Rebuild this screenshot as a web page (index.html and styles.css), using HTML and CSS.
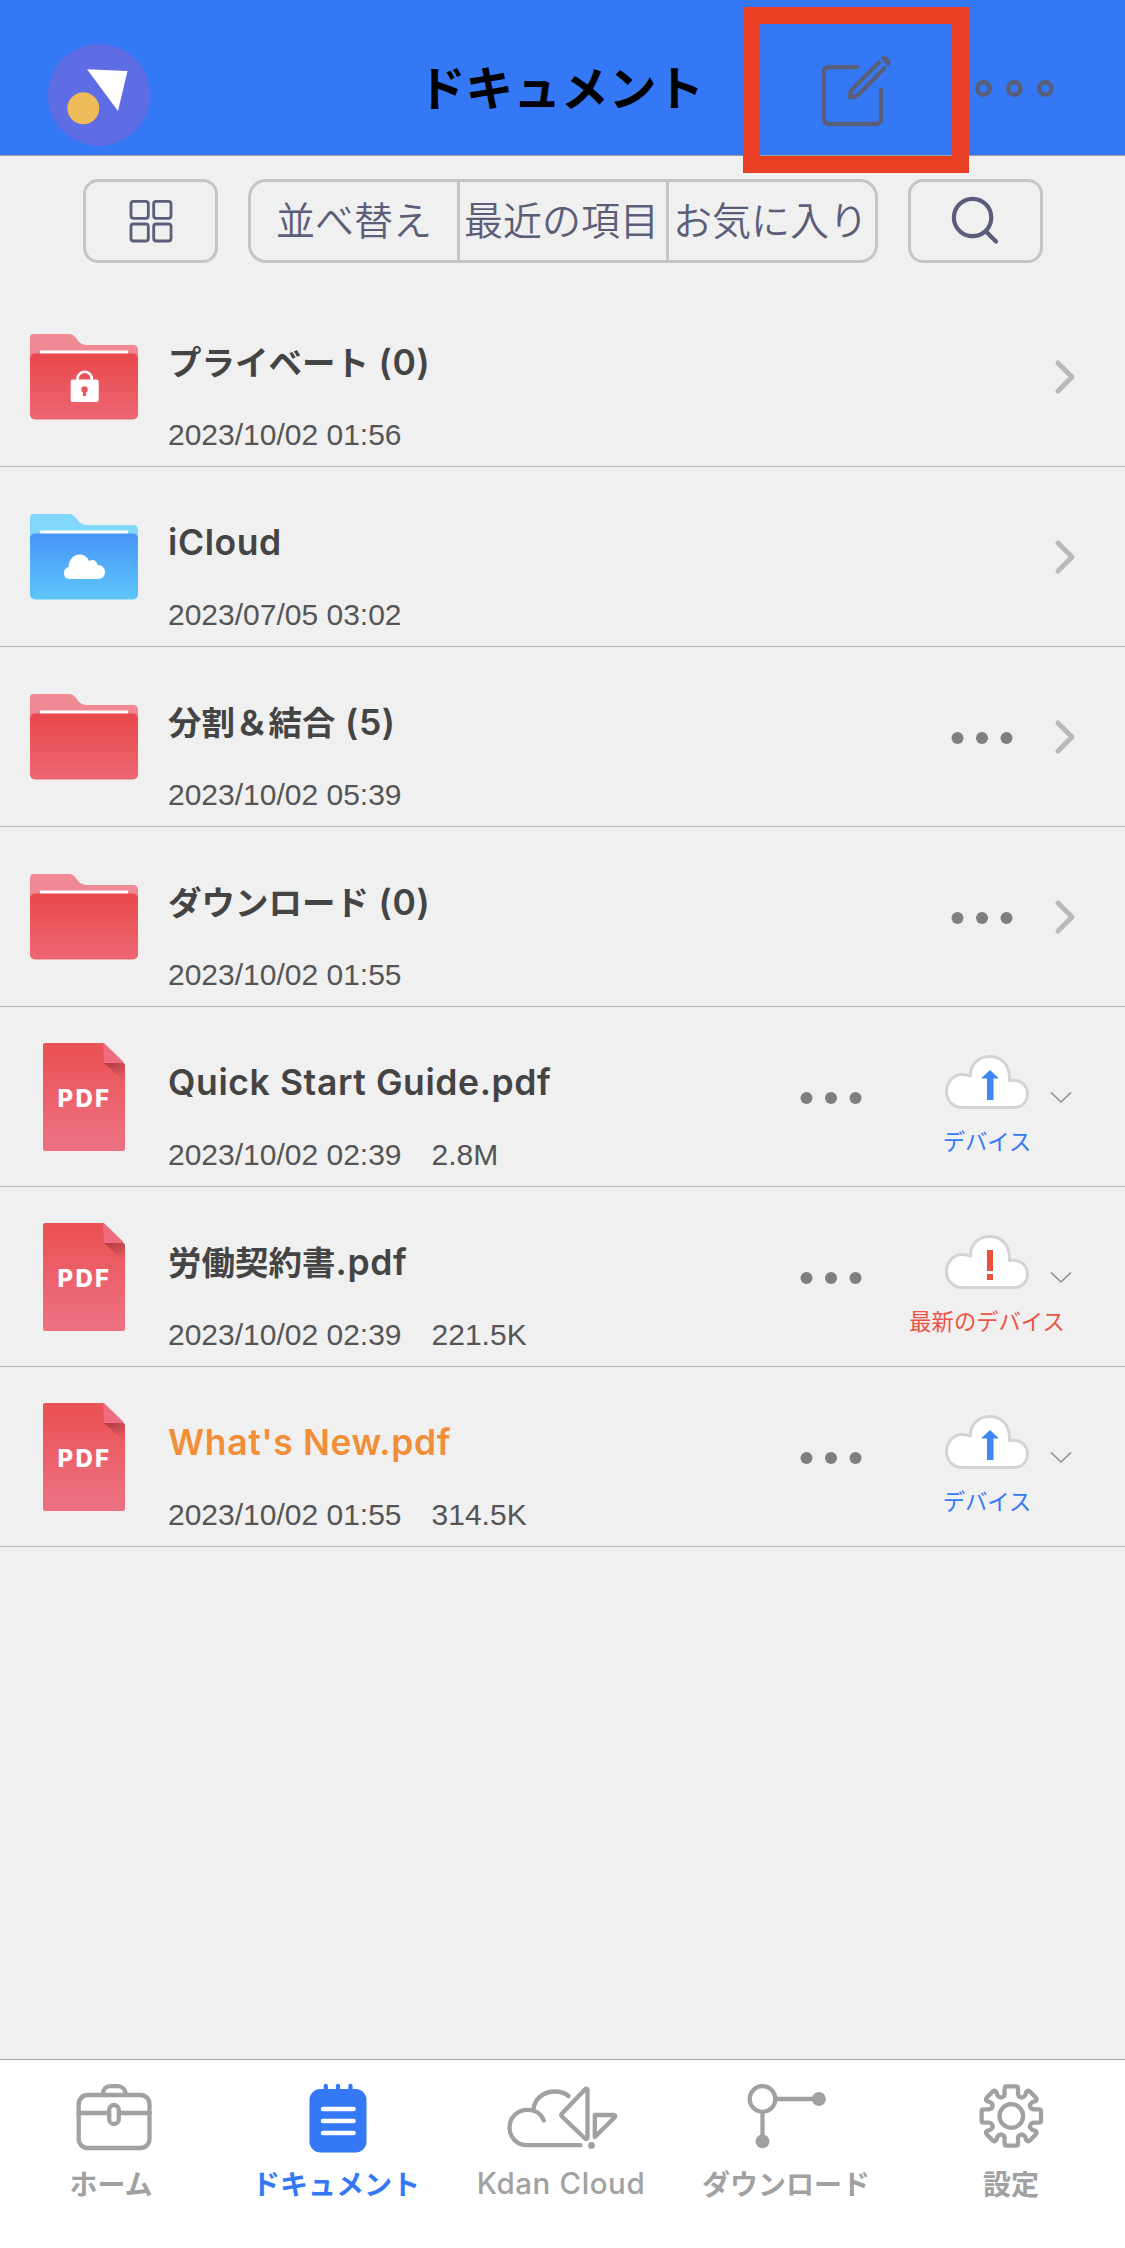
FILE: index.html
```html
<!DOCTYPE html>
<html lang="ja">
<head>
<meta charset="utf-8">
<title>ドキュメント</title>
<link rel="stylesheet" href="styles.css">
</head>
<body>
<svg class="defs" width="0" height="0" aria-hidden="true">
  <defs>
    <linearGradient id="red" x1="0" y1="0" x2="0" y2="1"><stop offset="0" stop-color="#e8484b"/><stop offset="1" stop-color="#ed6772"/></linearGradient>
    <linearGradient id="blue" x1="0" y1="0" x2="0" y2="1"><stop offset="0" stop-color="#4795f8"/><stop offset="1" stop-color="#5fc6f9"/></linearGradient>
    <linearGradient id="page" x1="0" y1="0" x2="0" y2="1"><stop offset=".1" stop-color="#eb5356"/><stop offset=".9" stop-color="#ed7080"/></linearGradient>
    <linearGradient id="shade" x1="0" y1="0" x2=".5" y2="1"><stop offset="0" stop-color="#ab3c40"/><stop offset="1" stop-color="#eb5a60"/></linearGradient>
  </defs>
  <symbol id="folder-red" viewBox="0 0 108 86">
    <path fill="#ef8994" d="M0 25V4Q0 0 4 0H39Q43 0 46 4L49 8Q52 11 56 11H103Q108 11 108 16V25Z"/>
    <path fill="#fff" d="M10 16.500H98V21H10Z"/>
    <rect y="19.500" width="108" height="66" rx="5" fill="url(#red)"/>
  </symbol>
  <symbol id="folder-blue" viewBox="0 0 108 86">
    <path fill="#82d8fa" d="M0 25V4Q0 0 4 0H39Q43 0 46 4L49 8Q52 11 56 11H103Q108 11 108 16V25Z"/>
    <path fill="#fff" d="M10 16.500H98V21H10Z"/>
    <rect y="19.500" width="108" height="66" rx="5" fill="url(#blue)"/>
  </symbol>
  <symbol id="pdf" viewBox="0 0 82 108">
    <path fill="url(#page)" d="M2 0H60L82 22V106Q82 108 80 108H2Q0 108 0 106V2Q0 0 2 0Z"/>
    <path fill="url(#shade)" d="M61 20H79Q82 20 82 23V39Z"/>
    <path fill="#ed6c80" d="M60 0Q61 0 62 1L80.500 19Q81 20 80 20H61Z"/>
  </symbol>
  <symbol id="chevron" viewBox="0 0 24 38">
    <path class="line-chevron" d="M5 5L19 19L5 33"/>
  </symbol>
  <symbol id="dots" viewBox="0 0 62 12">
    <g fill="#7f7f7f"><circle cx="6.500" cy="6" r="6"/><circle cx="31" cy="6" r="6"/><circle cx="55.500" cy="6" r="6"/></g>
  </symbol>
  <symbol id="cloud" viewBox="0 0 84 54">
    <path fill="#fff" stroke="#d4d4d4" stroke-width="3" stroke-linejoin="round" d="M17 52.500C8 52.500 1.500 45.500 1.500 36.500C1.500 27 8.500 19.500 17 19.500C20 19.500 22.500 20 25.500 21C25 10 33 1.500 45 1.500S65.500 11 64.500 25.500C75 24 82.500 30 82.500 39C82.500 47 77 52.500 69 52.500Z"/>
  </symbol>
  <symbol id="expand" viewBox="0 0 22 13">
    <path fill="none" stroke="#8e8e90" stroke-width="1.600" d="M1 1.500L11 11L21 1.500"/>
  </symbol>
</svg>

<div class="app">
  <header class="header">
    <svg class="avatar" viewBox="48 44 102 102">
      <circle cx="99" cy="95" r="51" fill="#5e6de4"/>
      <path fill="#fff" d="M87 69.300L127.500 71L118 111Z"/>
      <circle cx="83.300" cy="108.300" r="16" fill="#edbb58"/>
    </svg>
    <h1 class="title">ドキュメント</h1>
    <div class="actions">
      <div class="edit">
        <svg viewBox="820 54 74 74" width="74" height="74">
          <g fill="none" stroke="#5b5e78" stroke-width="4.300" stroke-linecap="round" stroke-linejoin="round">
            <path d="M857 67.200H829Q824 67.200 824 72V119Q824 124 829 124H876Q881 124 881 119V90"/>
            <path d="M879 62.500L852 89.500Q850 92 849.800 97Q855 97.500 857.500 95.500L884.500 68"/>
          </g>
          <path fill="#5b5e78" d="M880.500 57.500Q884 55 887.500 57.500Q891 60.500 890.500 64L888 66.500Z"/>
        </svg>
        <span class="highlight"></span>
      </div>
      <svg class="more" viewBox="975 80 79 17">
        <g fill="none" stroke="#5b5e78" stroke-width="4.500"><circle cx="983.500" cy="88.500" r="6.200"/><circle cx="1014.400" cy="88.500" r="6.200"/><circle cx="1045.300" cy="88.500" r="6.200"/></g>
      </svg>
    </div>
  </header>

  <div class="toolbar">
    <div class="tool">
      <svg viewBox="129 199 44 44" width="44" height="44">
        <g fill="none" stroke="#5b5e78" stroke-width="2.800"><rect x="131" y="201.300" width="17.300" height="17" rx="2.500"/><rect x="153.700" y="201.300" width="17.300" height="17" rx="2.500"/><rect x="131" y="224" width="17.300" height="17" rx="2.500"/><rect x="153.700" y="224" width="17.300" height="17" rx="2.500"/></g>
      </svg>
    </div>
    <div class="segments"><span>並べ替え</span><span>最近の項目</span><span>お気に入り</span></div>
    <div class="tool">
      <svg viewBox="951 196 50 50" width="50" height="50">
        <g fill="none" stroke="#5b5e78" stroke-width="4.200" stroke-linecap="round"><circle cx="972.600" cy="217.500" r="18.700"/><path d="M986 231.500L996 241.500"/></g>
      </svg>
    </div>
  </div>

  <main class="list">
    <div class="row">
      <div class="thumb"><svg class="folder" viewBox="0 0 108 86"><use href="#folder-red"/>
        <rect x="40.700" y="45.500" width="28" height="22.500" rx="2" fill="#fff"/><path d="M47.500 47V45a7.200 7.200 0 0 1 14.400 0V47" fill="none" stroke="#fff" stroke-width="2.600"/><circle cx="54.500" cy="55.500" r="3.200" fill="#e95760"/><path d="M54.500 56V62" stroke="#e95760" stroke-width="3.200"/></svg></div>
      <div class="info"><div class="name">プライベート<span class="latin"> (0)</span></div><div class="meta">2023/10/02 01:56</div></div>
      <svg class="chevron"><use href="#chevron"/></svg>
    </div>
    <div class="row">
      <div class="thumb"><svg class="folder" viewBox="0 0 108 86"><use href="#folder-blue"/>
        <path fill="#fff" d="M40 65C35.500 65 34 62 34 59C34 56 36 53.500 38.500 53C39 45 44 40.500 50 40.500C54 40.500 57.500 43 59 47C63 44.500 67 47 67.500 51C72 51 75 54 75 58C75 62 72.500 65 68 65Z"/></svg></div>
      <div class="info"><div class="name"><span class="latin">iCloud</span></div><div class="meta">2023/07/05 03:02</div></div>
      <svg class="chevron"><use href="#chevron"/></svg>
    </div>
    <div class="row">
      <div class="thumb"><svg class="folder"><use href="#folder-red"/></svg></div>
      <div class="info"><div class="name">分割＆結合<span class="latin"> (5)</span></div><div class="meta">2023/10/02 05:39</div></div>
      <svg class="dots"><use href="#dots"/></svg>
      <svg class="chevron"><use href="#chevron"/></svg>
    </div>
    <div class="row">
      <div class="thumb"><svg class="folder"><use href="#folder-red"/></svg></div>
      <div class="info"><div class="name">ダウンロード<span class="latin"> (0)</span></div><div class="meta">2023/10/02 01:55</div></div>
      <svg class="dots"><use href="#dots"/></svg>
      <svg class="chevron"><use href="#chevron"/></svg>
    </div>
    <div class="row">
      <div class="thumb"><svg class="pdf" viewBox="0 0 82 108"><use href="#pdf"/><text class="pdf-text" x="14.500" y="64">PDF</text></svg></div>
      <div class="info"><div class="name"><span class="latin">Quick Start Guide.pdf</span></div><div class="meta"><span>2023/10/02 02:39</span><span>2.8M</span></div></div>
      <svg class="dots"><use href="#dots"/></svg>
      <div class="sync"><svg class="cloud" viewBox="0 0 84 54"><use href="#cloud"/><path fill="#3d88f7" d="M45 15L54 23.500H48.500V45H42V23.500H36Z"/></svg><span>デバイス</span></div>
      <svg class="expand"><use href="#expand"/></svg>
    </div>
    <div class="row">
      <div class="thumb"><svg class="pdf" viewBox="0 0 82 108"><use href="#pdf"/><text class="pdf-text" x="14.500" y="64">PDF</text></svg></div>
      <div class="info"><div class="name">労働契約書<span class="latin">.pdf</span></div><div class="meta"><span>2023/10/02 02:39</span><span>221.5K</span></div></div>
      <svg class="dots"><use href="#dots"/></svg>
      <div class="sync sync-alert"><svg class="cloud" viewBox="0 0 84 54"><use href="#cloud"/><path fill="#e9513f" d="M42 15H48V36H42ZM42 39H48V45H42Z"/></svg><span>最新のデバイス</span></div>
      <svg class="expand"><use href="#expand"/></svg>
    </div>
    <div class="row">
      <div class="thumb"><svg class="pdf" viewBox="0 0 82 108"><use href="#pdf"/><text class="pdf-text" x="14.500" y="64">PDF</text></svg></div>
      <div class="info"><div class="name name-new"><span class="latin">What's New.pdf</span></div><div class="meta"><span>2023/10/02 01:55</span><span>314.5K</span></div></div>
      <svg class="dots"><use href="#dots"/></svg>
      <div class="sync"><svg class="cloud" viewBox="0 0 84 54"><use href="#cloud"/><path fill="#3d88f7" d="M45 15L54 23.500H48.500V45H42V23.500H36Z"/></svg><span>デバイス</span></div>
      <svg class="expand"><use href="#expand"/></svg>
    </div>
  </main>

  <nav class="tabs">
    <div class="tab">
      <svg viewBox="52.500 2080 120 76"><g class="line"><rect x="78.200" y="2095" width="70.800" height="53" rx="9"/><path d="M78 2113H106.500M120.500 2113H149"/><rect x="108.700" y="2105" width="9.600" height="19" rx="4.800"/><path d="M102.500 2094C102.500 2089 105.500 2086.200 110 2086.200H117C121.500 2086.200 125 2089 125 2094"/></g></svg>
      <span>ホーム</span>
    </div>
    <div class="tab tab-active">
      <svg viewBox="277.500 2080 120 76"><rect x="309" y="2089" width="57" height="63.500" rx="11" fill="#3478f6"/><path d="M325.300 2086V2092M337.500 2086V2092M350 2086V2092" stroke="#3478f6" stroke-width="4.300" stroke-linecap="round"/><path d="M322.500 2109H353M322.500 2121H353M322.500 2133H353" stroke="#fff" stroke-width="4.600" stroke-linecap="round"/></svg>
      <span>ドキュメント</span>
    </div>
    <div class="tab">
      <svg viewBox="502.500 2080 120 76"><g class="line"><path d="M580 2145.200H527C516 2145.200 509 2137 509 2127.500C509 2118 516.500 2109.800 527 2109.800C535 2109.800 541 2114 543.300 2120.500"/><path d="M533 2109C534 2099 543 2091.500 554.500 2091.500C560 2091.500 564.500 2093 568 2096"/><path d="M587 2089.500V2138Q586 2140 584.500 2138.500L561.500 2116.500Q560 2115 561.500 2113.500L584.500 2089.500Q586 2088 587 2089.500Z"/><path d="M594.300 2115H613.500Q616 2115.500 614 2117.500L594.300 2137Z"/></g><circle cx="591" cy="2145.400" r="3.400" fill="#a1a1a1"/></svg>
      <span class="latin">Kdan Cloud</span>
    </div>
    <div class="tab">
      <svg viewBox="727.500 2080 120 76"><g class="line"><circle cx="762" cy="2099" r="12.800"/><path d="M775 2099H818M762 2112V2141"/></g><g fill="#a1a1a1"><circle cx="818.400" cy="2099" r="6.900"/><circle cx="762" cy="2141.300" r="6.900"/></g></svg>
      <span>ダウンロード</span>
    </div>
    <div class="tab">
      <svg viewBox="952.500 2080 120 76"><g class="line" transform="translate(1010.800 2116)"><circle r="11.800"/><path d="M-4.500 -29.700H4.500Q6.700 -29.700 6.700 -27.500V-22.500C6.700 -18.500 11 -17 13.800 -20.500L15 -24Q16.500 -26 18.500 -24.500L24.500 -18.500Q26 -16.500 24.500 -15L20.500 -13.500C17 -11 19 -6.700 23 -6.700H27.500Q29.700 -6.700 29.700 -4.500V4.500Q29.700 6.700 27.500 6.700H23C19 6.700 17 11 20.500 13.500L24.500 15Q26 16.500 24.500 18.500L18.500 24.500Q16.500 26 15 24L13.800 20.500C11 17 6.700 18.500 6.700 22.500V27.500Q6.700 29.700 4.500 29.700H-4.500Q-6.700 29.700 -6.700 27.500V22.500C-6.700 18.500 -11 17 -13.800 20.500L-15 24Q-16.500 26 -18.500 24.500L-24.500 18.500Q-26 16.500 -24.500 15L-20.500 13.500C-17 11 -19 6.700 -23 6.700H-27.500Q-29.700 6.700 -29.700 4.500V-4.500Q-29.700 -6.700 -27.500 -6.700H-23C-19 -6.700 -17 -11 -20.500 -13.500L-24.500 -15Q-26 -16.500 -24.500 -18.500L-18.500 -24.500Q-16.500 -26 -15 -24L-13.800 -20.500C-11 -17 -6.700 -18.500 -6.700 -22.500V-27.500Q-6.700 -29.700 -4.500 -29.700Z"/></g></svg>
      <span>設定</span>
    </div>
  </nav>
</div>
</body>
</html>
```
FILE: styles.css
```css
* { box-sizing: border-box; }

body {
  margin: 0;
  background: #f0f0f0;
  font-family: "Noto Sans CJK JP", sans-serif;
}

svg { display: block; flex: none; }
.defs { position: absolute; }

.app {
  display: flex;
  flex-direction: column;
  width: 1125px;
  height: 2248px;
}

/* Header */
.header {
  display: grid;
  grid-template-columns: 1fr auto 1fr;
  align-items: start;
  height: 156px;
  padding: 44px 71px 0 48px;
  background: #3478f6;
  border-bottom: 1px solid #9a9da5;
}
.avatar { width: 102px; height: 102px; }
.title {
  margin: 7px 0 0 20px;
  font-size: 47.700px;
  line-height: 70px;
  font-weight: 700;
  color: #000;
}
.actions {
  display: flex;
  justify-content: flex-end;
  gap: 81px;
}
.edit { position: relative; margin-top: 10px; }
.highlight {
  position: absolute;
  left: -77px;
  top: -47px;
  width: 226px;
  height: 166px;
  border: 17px solid #e94025;
}
.more { width: 79px; height: 17px; margin-top: 36px; }

/* Toolbar */
.toolbar {
  display: flex;
  gap: 30px;
  height: 131px;
  padding: 23px 82px 0 83px;
}
.tool {
  display: flex;
  align-items: center;
  justify-content: center;
  width: 135px;
  height: 84px;
  border: 3px solid #c5c5c5;
  border-radius: 15px;
}
.segments {
  display: grid;
  grid-template-columns: 206px 209px 1fr;
  flex: 1;
  height: 84px;
  border: 3px solid #c5c5c5;
  border-radius: 18px;
}
.segments span {
  font-size: 39px;
  line-height: 73px;
  font-weight: 350;
  text-align: center;
  white-space: nowrap;
  color: #5b5e78;
}
.segments span + span {
  margin-right: 3px;
  border-left: 3px solid #c5c5c5;
}

/* File list */
.list { flex: 1; }
.row {
  display: flex;
  align-items: center;
  height: 180px;
  padding-right: 48px;
  border-bottom: 1px solid #b9b9b9;
}
.thumb {
  display: flex;
  justify-content: center;
  width: 168px;
  flex: none;
}
.folder { width: 108px; height: 86px; }
.pdf { width: 82px; height: 108px; }
.pdf-text {
  font: 800 24px Inter, sans-serif;
  letter-spacing: 2.300px;
  fill: #fff;
}
.info { flex: 1; align-self: flex-start; padding-top: 46px; }
.name {
  height: 55px;
  font-size: 33.500px;
  line-height: 55px;
  font-weight: 700;
  color: #444;
  white-space: pre;
}
.name .latin {
  font: 600 35.500px/1 Inter, sans-serif;
  letter-spacing: 0.6px;
}
.name-new { color: #f08f38; }
.meta {
  display: flex;
  gap: 30px;
  margin-top: 30px;
  font: 30px/34px "Liberation Sans", sans-serif;
  color: #555;
}
.chevron { width: 24px; height: 38px; margin-left: 40px; }
.line-chevron {
  fill: none;
  stroke: #b9b9bb;
  stroke-width: 5px;
  stroke-linecap: round;
  stroke-linejoin: round;
}
.dots { width: 62px; height: 12px; margin-top: 3px; }
.sync {
  display: flex;
  flex-direction: column;
  align-items: center;
  align-self: flex-start;
  width: 160px;
  margin-left: 45px;
  padding-top: 48px;
  font-size: 22.300px;
  line-height: 32px;
  white-space: nowrap;
  color: #3478f6;
}
.sync-alert { color: #eb5545; }
.sync span { margin-top: 15px; }
.cloud { width: 84px; height: 54px; }
.expand { width: 22px; height: 13px; margin: 2px 5px 0 -17px; }

/* Tab bar */
.tabs {
  display: grid;
  grid-template-columns: repeat(5, 1fr);
  height: 189px;
  background: #fff;
  border-top: 1px solid #a9a9a9;
}
.tab {
  display: flex;
  flex-direction: column;
  align-items: center;
  padding-top: 20px;
  font-size: 28px;
  line-height: 40px;
  font-weight: 700;
  color: #a1a1a1;
}
.tab svg { width: 120px; height: 76px; }
.tab span { margin: 7px 3px 0 0; }
.tab .latin {
  font-family: Inter, sans-serif;
  font-size: 29.500px;
  font-weight: 500;
  letter-spacing: 0.6px;
}
.tab-active { color: #3478f6; }
.line {
  fill: none;
  stroke: #a1a1a1;
  stroke-width: 4.300px;
  stroke-linecap: round;
  stroke-linejoin: round;
}
```
